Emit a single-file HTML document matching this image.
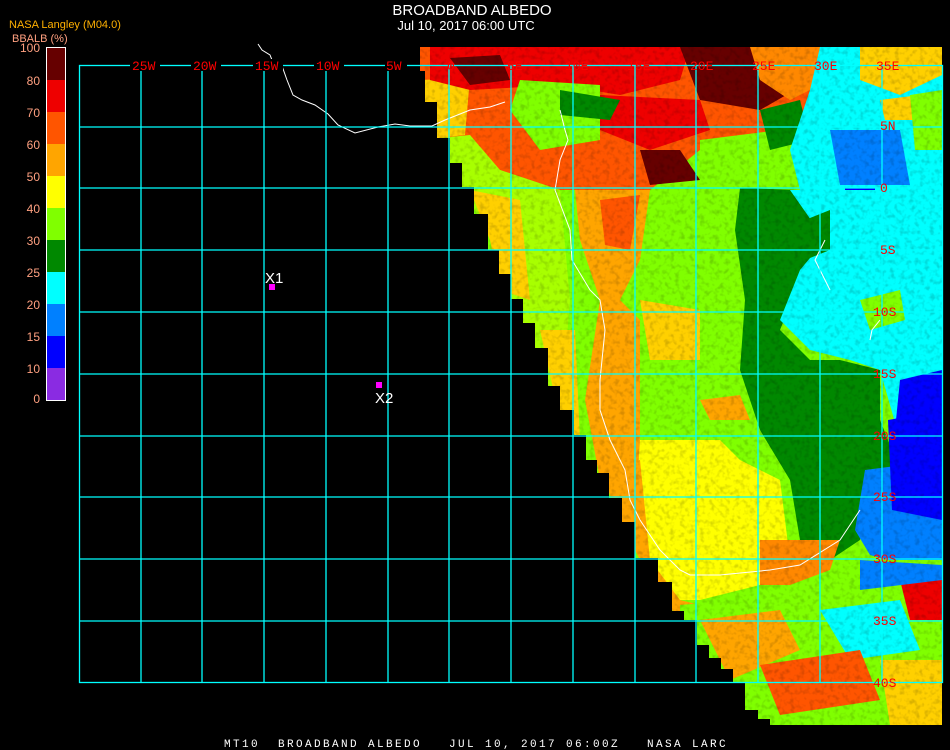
<!DOCTYPE html>
<html><head><meta charset="utf-8"><style>
html,body{margin:0;padding:0;background:#000;width:950px;height:750px;overflow:hidden}
svg{display:block}
</style></head><body>
<svg width="950" height="750" viewBox="0 0 950 750" xmlns="http://www.w3.org/2000/svg" font-family="Liberation Sans, sans-serif">
<defs>
<clipPath id="dc"><polygon points="420,47 942,47 942,725 770,725 770,719 758,719 758,710 745,710 745,683 733,683 733,669 721,669 721,658 709,658 709,645 697,645 697,620 684,620 684,611 672,611 672,582 658,582 658,558 635,558 635,522 622,522 622,498 609,498 609,473 597,473 597,460 586,460 586,435 574,435 574,410 560,410 560,386 548,386 548,348 535,348 535,323 523,323 523,299 511,299 511,274 499,274 499,250 488,250 488,214 474,214 474,187 462,187 462,163 450,163 450,138 437,138 437,102 425,102 425,71 420,71"/></clipPath>
<filter id="nz" x="0" y="0" width="100%" height="100%"><feTurbulence type="fractalNoise" baseFrequency="0.2" numOctaves="2" seed="3"/><feColorMatrix type="matrix" values="0 0 0 0 0  0 0 0 0 0  0 0 0 0 0  0 0 0 -3 1.6"/><feComposite in2="SourceGraphic" operator="in"/></filter>
</defs>
<g clip-path="url(#dc)">
<rect x="400" y="40" width="550" height="700" fill="#80ff00"/>
<!-- top band -->
<polygon points="420,47 830,47 830,110 760,140 700,150 650,190 560,190 500,170 420,130" fill="#ff5500"/>
<polygon points="420,80 470,78 465,135 420,140" fill="#ffd000"/>
<polygon points="430,47 690,47 680,80 620,95 560,85 470,90 430,80" fill="#ee0000"/>
<polygon points="680,47 790,47 795,90 760,110 700,100" fill="#660000"/>
<polygon points="450,58 500,55 510,80 470,85" fill="#660000"/>
<polygon points="600,95 700,100 710,130 650,150 600,130" fill="#ee0000"/>
<polygon points="640,150 680,150 700,180 650,185" fill="#660000"/>
<polygon points="520,80 600,85 600,140 540,150 510,110" fill="#80ff00"/>
<polygon points="560,90 620,100 610,120 560,115" fill="#008800"/>
<polygon points="700,140 780,130 800,185 700,188" fill="#80ff00"/>
<polygon points="760,110 800,100 810,140 770,150" fill="#008800"/>
<polygon points="750,47 830,47 830,80 790,100 760,80" fill="#ff8800"/>
<!-- right top cyan/blue -->
<polygon points="820,47 942,47 942,190 800,190 790,150 810,90" fill="#00ffff"/>
<polygon points="860,47 942,47 942,75 900,95 860,80" fill="#ffd000"/>
<polygon points="880,100 920,95 915,120 885,120" fill="#ffd000"/>
<polygon points="830,130 900,130 910,185 840,185" fill="#0080ff"/>
<polygon points="845,188 875,188 875,220 845,220" fill="#0000ff"/>
<polygon points="910,95 942,90 942,150 915,150" fill="#80ff00"/>
<polygon points="900,240 942,230 942,300 905,290" fill="#ffd000"/>
<!-- left of coast (yellow-green with yellow) -->
<polygon points="420,140 470,135 500,170 560,190 570,300 560,420 545,400 500,260 470,200" fill="#a8ff00"/>
<polygon points="470,190 520,200 530,300 500,290 490,240" fill="#ffd000"/>
<polygon points="540,330 575,330 580,440 560,420" fill="#ffd000"/>
<!-- coast strip orange -->
<polygon points="575,190 650,190 640,260 620,300 640,320 640,470 600,480 585,400 600,300 580,240" fill="#ffa500"/>
<polygon points="600,200 640,195 630,250 605,245" fill="#ff5500"/>
<polygon points="640,300 700,310 700,360 650,360" fill="#ffd000"/>
<!-- dark green -->
<polygon points="740,188 800,190 820,240 800,280 780,330 810,360 840,360 880,370 880,420 900,470 870,500 860,540 830,560 800,540 790,480 760,430 740,370 745,300 735,230" fill="#008800"/>
<!-- cyan -->
<polygon points="790,190 942,190 942,430 900,440 880,370 850,360 810,350 780,320 800,270 825,240" fill="#00ffff"/>
<polygon points="805,220 830,210 830,250 805,260" fill="#008800"/>
<polygon points="860,300 900,290 905,320 870,330" fill="#80ff00"/>
<polygon points="900,380 942,370 942,470 890,480" fill="#0000ff"/>
<polygon points="865,470 942,460 942,575 870,555 855,530" fill="#0080ff"/>
<polygon points="888,420 942,410 942,520 892,510" fill="#0000ff"/>
<!-- south yellow/orange -->
<polygon points="640,440 720,440 740,460 780,480 790,560 760,585 700,600 670,600 650,560 635,520" fill="#ffff00"/>
<polygon points="600,470 640,460 650,560 680,600 700,605 690,615 670,610 640,560 620,520" fill="#ffa500"/>
<polygon points="760,540 840,540 830,570 790,585 760,585" fill="#ff8800"/>
<polygon points="700,400 740,395 750,420 710,420" fill="#ffa500"/>
<!-- bottom noisy -->
<polygon points="680,605 790,595 860,560 942,560 942,725 680,725" fill="#80ff00"/>
<polygon points="700,620 780,610 800,650 730,680" fill="#ffa500"/>
<polygon points="820,610 900,600 920,650 850,660" fill="#00ffff"/>
<polygon points="760,665 860,650 880,700 780,715" fill="#ff5500"/>
<polygon points="880,660 942,660 942,725 890,725" fill="#ffd000"/>
<polygon points="900,580 942,575 942,620 910,620" fill="#ee0000"/>
<polygon points="860,560 942,565 942,580 860,590" fill="#0080ff"/>
<rect x="400" y="40" width="550" height="700" fill="#ff3300" filter="url(#nz)" opacity="0.15"/>
</g>
<!-- coast lines -->
<g fill="none" stroke="#fff" stroke-width="1">
<polyline points="258,44 262,50 270,55 272,60 282,66 287,80 293,95 302,100 315,105 328,114 338,125 355,133 378,127 395,124 410,126 432,126 445,120 470,110 490,107 505,102"/>
<polyline points="560,110 565,130 568,140 560,160 555,190 570,230 572,260 590,290 600,300 605,330 600,380 600,410 610,440 625,470 630,500 640,520 660,550 680,570 690,575 720,575 770,570 800,565 840,540 860,510"/>
<polyline points="825,240 815,260 830,290"/>
<polyline points="870,340 872,330 880,320"/>
</g>
<!-- grid -->
<g stroke="#00ffff" stroke-width="1.3" fill="none">
<rect x="79.5" y="65.5" width="863" height="617"/>
<path d="M141 65V683M202 65V683M264 65V683M326 65V683M388 65V683M449 65V683M511 65V683M573 65V683M635 65V683M696 65V683M758 65V683M820 65V683M882 65V683M79 127H943M79 188H943M79 250H943M79 312H943M79 374H943M79 436H943M79 497H943M79 559H943M79 621H943"/>
</g>
<!-- labels -->
<g font-family="Liberation Mono, monospace" font-size="13" fill="#ff0000">
<rect x="130" y="59" width="30" height="12" fill="#000"/><text x="132" y="70">25W</text>
<rect x="191" y="59" width="30" height="12" fill="#000"/><text x="193" y="70">20W</text>
<rect x="253" y="59" width="30" height="12" fill="#000"/><text x="255" y="70">15W</text>
<rect x="314" y="59" width="30" height="12" fill="#000"/><text x="316" y="70">10W</text>
<rect x="385" y="59" width="22" height="12" fill="#000"/><text x="386" y="70">5W</text>
<text x="447" y="70">0</text>
<text x="507" y="70">5E</text>
<text x="565" y="70">10E</text>
<text x="627" y="70">15E</text>
<text x="690" y="70">20E</text>
<text x="752" y="70">25E</text>
<text x="814" y="70">30E</text>
<text x="876" y="70">35E</text>
<text x="880" y="130">5N</text>
<text x="880" y="192">0</text>
<text x="880" y="254">5S</text>
<text x="873" y="316">10S</text>
<text x="873" y="378">15S</text>
<text x="873" y="440">20S</text>
<text x="873" y="501">25S</text>
<text x="873" y="563">30S</text>
<text x="873" y="625">35S</text>
<text x="873" y="687">40S</text>
</g>
<text x="472" y="15" font-size="15" fill="#fff" text-anchor="middle">BROADBAND ALBEDO</text>
<text x="466" y="30" font-size="13" fill="#fff" text-anchor="middle">Jul 10, 2017 06:00 UTC</text>
<text x="9" y="28" font-size="11" fill="#ffb000">NASA Langley (M04.0)</text>
<text x="12" y="42" font-size="11" fill="#ffa080">BBALB (%)</text>
<g>
<rect x="46" y="48" width="19" height="32" fill="#660000"/>
<rect x="46" y="80" width="19" height="32" fill="#ee0000"/>
<rect x="46" y="112" width="19" height="32" fill="#ff5500"/>
<rect x="46" y="144" width="19" height="32" fill="#ffa500"/>
<rect x="46" y="176" width="19" height="32" fill="#ffff00"/>
<rect x="46" y="208" width="19" height="32" fill="#80ff00"/>
<rect x="46" y="240" width="19" height="32" fill="#008800"/>
<rect x="46" y="272" width="19" height="32" fill="#00ffff"/>
<rect x="46" y="304" width="19" height="32" fill="#0080ff"/>
<rect x="46" y="336" width="19" height="32" fill="#0000ff"/>
<rect x="46" y="368" width="19" height="32" fill="#8a2be2"/>
<rect x="46.5" y="47.5" width="19" height="353" fill="none" stroke="#fff" stroke-width="1"/>
</g>
<g font-size="12" fill="#ffa080" text-anchor="end">
<text x="40" y="52">100</text><text x="40" y="85">80</text><text x="40" y="117">70</text><text x="40" y="149">60</text><text x="40" y="181">50</text><text x="40" y="213">40</text><text x="40" y="245">30</text><text x="40" y="277">25</text><text x="40" y="309">20</text><text x="40" y="341">15</text><text x="40" y="373">10</text><text x="40" y="403">0</text>
</g>
<rect x="269" y="284" width="6" height="6" fill="#ff00ff"/>
<text x="265" y="283" font-size="15" fill="#fff">X1</text>
<rect x="376" y="382" width="6" height="6" fill="#ff00ff"/>
<text x="375" y="403" font-size="15" fill="#fff">X2</text>
<text x="224" y="747" font-family="Liberation Mono, monospace" font-size="11" letter-spacing="2.4" fill="#fff" xml:space="preserve">MT10  BROADBAND ALBEDO   JUL 10, 2017 06:00Z   NASA LARC</text>
</svg>
</body></html>
